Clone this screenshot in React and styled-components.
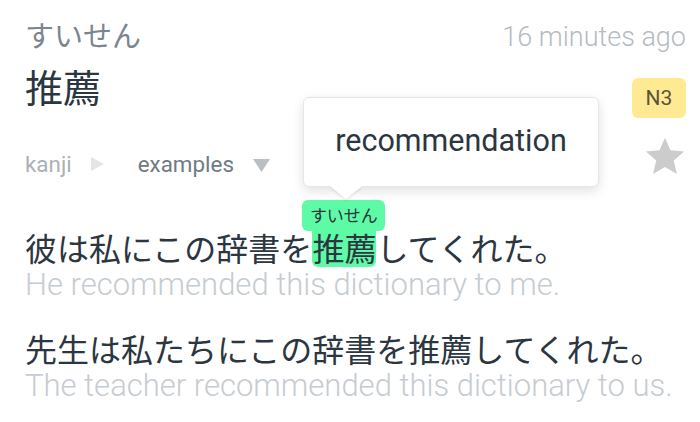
import React from "react";
import styled, { createGlobalStyle } from "styled-components";

const Global = createGlobalStyle`
  html, body { margin: 0; padding: 0; background: #ffffff; }
  body { font-family: "Noto Sans CJK JP", "Noto Sans", sans-serif; }
`;

const latin = `"Roboto", "Noto Sans CJK JP", sans-serif`;

const Page = styled.div`
  position: relative;
  width: 700px;
  height: 422px;
  box-sizing: border-box;
  padding: 10px 14px 0 25px;
  overflow: hidden;
`;

const Row = styled.div`
  display: flex;
  justify-content: space-between;
  align-items: ${(p) => p.$align || "center"};
  height: ${(p) => (p.$h ? `${p.$h}px` : "auto")};
`;

const Reading = styled.div`
  font-size: 29px;
  line-height: 48px;
  color: #7b858f;
`;

const Time = styled.div`
  font-family: ${latin};
  font-size: 27px;
  line-height: 48px;
  padding-top: 3px;
  color: #b4bbc1;
  font-weight: 300;
`;

const Word = styled.div`
  font-size: 38px;
  line-height: 52px;
  color: #2b3640;
  margin-top: 2px;
`;

const Badge = styled.div`
  width: 54px;
  height: 40px;
  border-radius: 6px;
  background: #ffe993;
  color: #5b5536;
  font-family: ${latin};
  font-size: 21px;
  display: flex;
  align-items: center;
  justify-content: center;
  margin-top: 20px;
`;

const Nav = styled.div`
  display: flex;
  align-items: center;
  font-family: ${latin};
  font-size: 22.4px;
  line-height: 26px;
  margin-top: 33px;
`;

const Crumb = styled.span`
  color: ${(p) => p.$color};
  margin-left: ${(p) => p.$ml || 0}px;
`;

const Tri = styled.svg`
  display: block;
  margin: ${(p) => p.$margin};
`;

const StarWrap = styled.div`
  display: flex;
  margin-top: 17px;
`;

const Sentences = styled.div`
  margin-top: 50px;
  display: flex;
  flex-direction: column;
  gap: 25px;
`;

const Sentence = styled.div`
  display: flex;
  flex-direction: column;
`;

const Jp = styled.div`
  font-size: 32px;
  line-height: 40px;
  color: #2b3640;
  white-space: nowrap;
`;

const En = styled.div`
  font-family: ${latin};
  font-size: 31px;
  line-height: 36px;
  color: #c6ccd1;
  white-space: nowrap;
  font-weight: 300;
`;

const Hl = styled.span`
  position: relative;
  display: inline-block;
  background: #5dfba6;
  border-radius: 0 0 6px 6px;
  line-height: 40px;
  vertical-align: top;
`;

const RubyTag = styled.span`
  position: absolute;
  left: -10px;
  right: -9px;
  bottom: 100%;
  margin-bottom: -4px;
  height: 31px;
  background: #5dfba6;
  border-radius: 6px;
  font-size: 17px;
  line-height: 30px;
  text-align: center;
  color: #2b3640;
`;

const Tooltip = styled.div`
  position: absolute;
  left: 303px;
  top: 97px;
  width: 296px;
  height: 90px;
  box-sizing: border-box;
  background: #ffffff;
  border: 1px solid #e3e7e9;
  border-radius: 6px;
  box-shadow: 0 4px 12px rgba(0, 0, 0, 0.12);
  display: flex;
  align-items: center;
  justify-content: center;
  font-family: ${latin};
  font-size: 30.5px;
  color: #2b3640;
  padding-bottom: 4px;
`;

const Arrow = styled.div`
  position: absolute;
  left: 26px;
  bottom: -13px;
  width: 0;
  height: 0;
  border-left: 16px solid transparent;
  border-right: 16px solid transparent;
  border-top: 13px solid #ffffff;
  filter: drop-shadow(0 2px 1px rgba(0, 0, 0, 0.08));
`;

export default function App() {
  return (
    <>
      <Global />
      <Page>
        <Row $align="flex-start" $h={48}>
          <Reading>すいせん</Reading>
          <Time>16 minutes ago</Time>
        </Row>
        <Row $align="flex-start">
          <Word>推薦</Word>
          <Badge>N3</Badge>
        </Row>
        <Row $align="flex-start">
          <Nav>
            <Crumb $color="#aab1b7">kanji</Crumb>
            <Tri $margin="0 0 0 19px" width="13" height="14" viewBox="0 0 13 14">
              <polygon points="0,0 13,7 0,14" fill="#e3e6e9" />
            </Tri>
            <Crumb $color="#6f7a84" $ml={34}>examples</Crumb>
            <Tri $margin="2px 0 0 19px" width="17" height="13" viewBox="0 0 17 13">
              <polygon points="0,0 17,0 8.5,13" fill="#b9bfc4" />
            </Tri>
          </Nav>
          <StarWrap>
            <svg width="42" height="42" viewBox="0 0 24 24">
              <path
                d="M12 1.5l3.1 7.2 7.8.7-5.9 5.2 1.8 7.7L12 18.3 5.2 22.3 7 14.6 1.1 9.4l7.8-.7z"
                fill="#cccccc"
              />
            </svg>
          </StarWrap>
        </Row>
        <Sentences>
          <Sentence>
            <Jp>
              彼は私にこの辞書を
              <Hl>
                <RubyTag>すいせん</RubyTag>
                推薦
              </Hl>
              してくれた。
            </Jp>
            <En>He recommended this dictionary to me.</En>
          </Sentence>
          <Sentence>
            <Jp>先生は私たちにこの辞書を推薦してくれた。</Jp>
            <En>The teacher recommended this dictionary to us.</En>
          </Sentence>
        </Sentences>
        <Tooltip>
          recommendation
          <Arrow />
        </Tooltip>
      </Page>
    </>
  );
}
